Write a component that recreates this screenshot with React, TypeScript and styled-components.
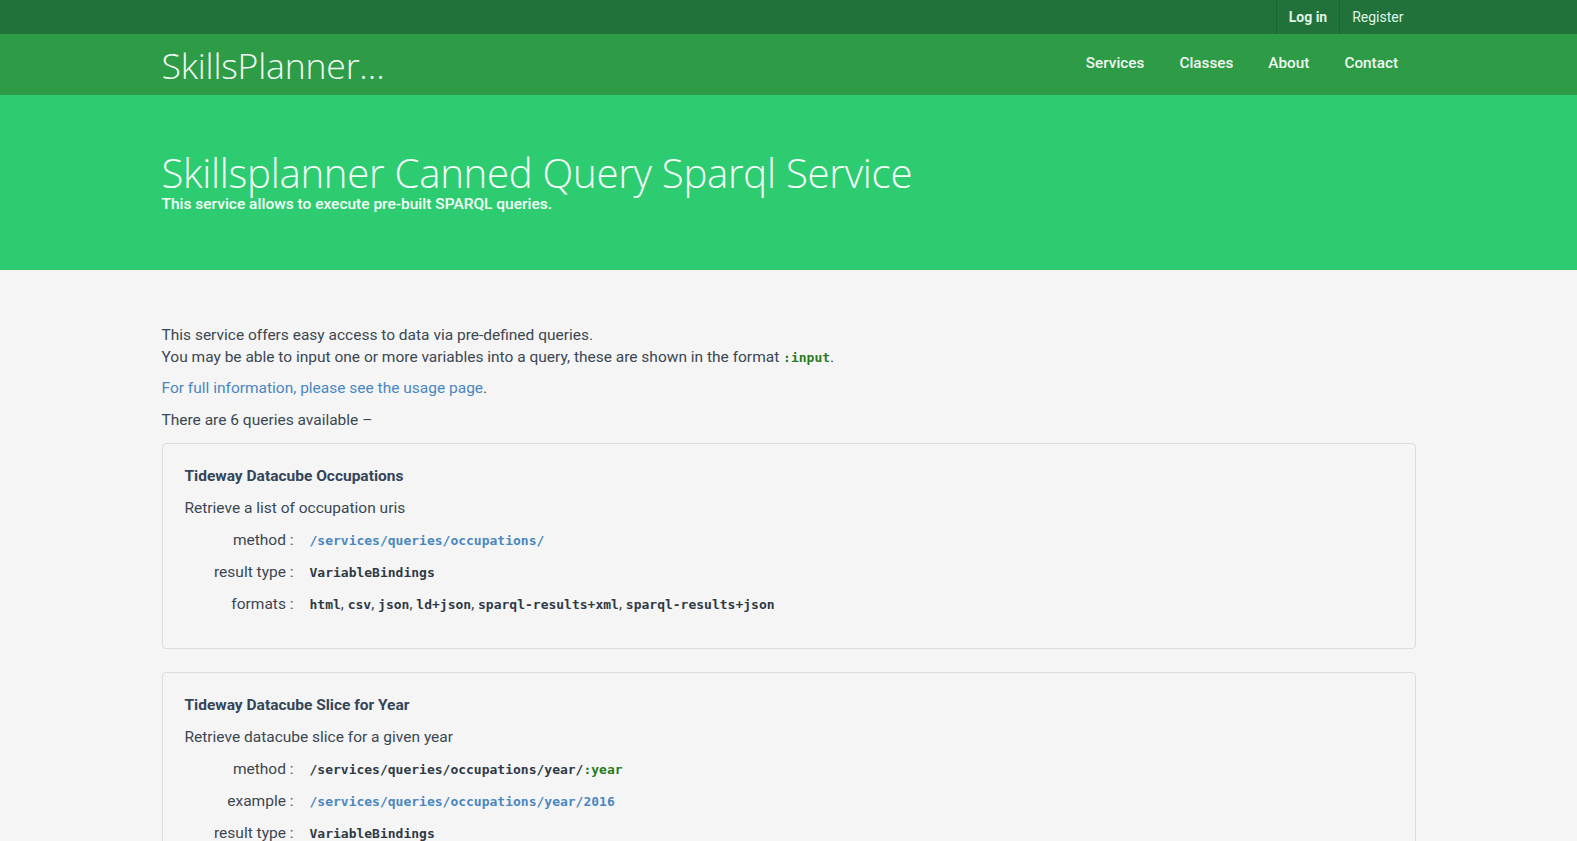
import React from "react";
import styled, { createGlobalStyle } from "styled-components";

const Global = createGlobalStyle`
  html, body { margin: 0; padding: 0; }
  body {
    background: #f5f5f5;
    font-family: Roboto, "Liberation Sans", Arial, sans-serif;
    font-size: 15.5px;
    line-height: 21px;
    color: #34495e;
  }
  * { box-sizing: border-box; }
`;

const Container = styled.div`
  width: 1254px;
  margin: 0 auto;
`;

const TopBar = styled.div`
  background: #21723a;
  height: 34px;
`;

const TopInner = styled(Container)`
  display: flex;
  justify-content: flex-end;
  height: 100%;
`;

const TopLink = styled.a<{ $bold?: boolean; $divider?: boolean }>`
  display: flex;
  align-items: center;
  padding: 0 12px;
  height: 100%;
  color: #dff3e4;
  font-size: 14px;
  font-weight: ${(p) => (p.$bold ? 700 : 400)};
  text-decoration: none;
  border-left: ${(p) => (p.$divider ? "1px solid #1b6331" : "none")};
  border-right: ${(p) => (p.$divider ? "1px solid #1b6331" : "none")};
`;

const NavBar = styled.div`
  background: #2e9b47;
  height: 61px;
`;

const NavInner = styled(Container)`
  display: flex;
  align-items: center;
  justify-content: space-between;
  height: 100%;
`;

const Brand = styled.a`
  font-family: "Open Sans", sans-serif;
  font-weight: 300;
  font-size: 35.6px;
  color: #f2fbf4;
  text-decoration: none;
  margin-top: 2px;
  letter-spacing: -0.2px;
`;

const NavLinks = styled.nav`
  display: flex;
  align-items: center;
`;

const NavLink = styled.a`
  padding: 0 17.5px;
  color: #eef8f0;
  font-size: 15.3px;
  font-weight: 500;
  text-decoration: none;
  margin-top: -2px;
`;

const Hero = styled.header`
  background: #2ecc71;
  height: 175px;
  padding-top: 54px;
`;

const HeroTitle = styled.h1`
  font-family: "Open Sans", sans-serif;
  font-weight: 300;
  font-size: 40.2px;
  line-height: 48px;
  color: #f4fff8;
  margin: 0;
  letter-spacing: -0.3px;
`;

const HeroSub = styled.p`
  margin: -3px 0 0;
  color: #f4fff8;
  font-size: 15.5px;
  font-weight: 500;
`;

const Main = styled(Container)`
  padding-top: 55px;
`;

const Para = styled.p<{ $mb?: number }>`
  margin: 0 0 ${(p) => (p.$mb ?? 10)}px;
  color: #3b4752;
  line-height: 21.5px;
`;

const Link = styled.a`
  color: #4a87bf;
  text-decoration: none;
`;

const InlineCode = styled.code`
  font-family: "DejaVu Sans Mono", monospace;
  font-size: 13px;
  font-weight: 700;
  color: #2a7a1e;
`;

const Card = styled.section`
  border: 1px solid #dcdcdc;
  border-radius: 4px;
  padding: 22px 22px 33px;
  margin-bottom: 23px;
`;

const CardTitle = styled.h4`
  margin: 0 0 11px;
  font-size: 15.5px;
  line-height: 21px;
  font-weight: 700;
  color: #34455a;
`;

const CardDesc = styled.p`
  margin: 0 0 11px;
  color: #3b4752;
`;

const Dl = styled.dl`
  display: grid;
  grid-template-columns: 109px 1fr;
  column-gap: 16px;
  row-gap: 11px;
  margin: 0;
`;

const Dt = styled.dt`
  text-align: right;
  color: #3b4752;
`;

const Dd = styled.dd`
  margin: 0;
  font-family: "DejaVu Sans Mono", monospace;
  font-size: 13px;
  font-weight: 700;
  color: #2f3a46;
`;

const Mono = styled.span<{ $tone?: "link" | "var" | "plain" }>`
  font-family: "DejaVu Sans Mono", monospace;
  font-size: 13px;
  font-weight: 700;
  color: ${(p) =>
    p.$tone === "link" ? "#4a87bf" : p.$tone === "var" ? "#2a7a1e" : "#2f3a46"};
`;

const Sep = styled.span`
  font-family: Roboto, sans-serif;
  font-size: 15.5px;
  font-weight: 400;
  color: #3b4752;
`;

type Row = { label: string; value: React.ReactNode };

const formats = ["html", "csv", "json", "ld+json", "sparql-results+xml", "sparql-results+json"];

const FormatList = () => (
  <>
    {formats.map((f, i) => (
      <React.Fragment key={f}>
        <Mono>{f}</Mono>
        {i < formats.length - 1 && <Sep>, </Sep>}
      </React.Fragment>
    ))}
  </>
);

const queries: { title: string; desc: string; rows: Row[] }[] = [
  {
    title: "Tideway Datacube Occupations",
    desc: "Retrieve a list of occupation uris",
    rows: [
      { label: "method :", value: <Mono $tone="link">/services/queries/occupations/</Mono> },
      { label: "result type :", value: <Mono>VariableBindings</Mono> },
      { label: "formats :", value: <FormatList /> },
    ],
  },
  {
    title: "Tideway Datacube Slice for Year",
    desc: "Retrieve datacube slice for a given year",
    rows: [
      {
        label: "method :",
        value: (
          <>
            <Mono>/services/queries/occupations/year/</Mono>
            <Mono $tone="var">:year</Mono>
          </>
        ),
      },
      { label: "example :", value: <Mono $tone="link">/services/queries/occupations/year/2016</Mono> },
      { label: "result type :", value: <Mono>VariableBindings</Mono> },
      { label: "formats :", value: <FormatList /> },
    ],
  },
];

export default function App() {
  return (
    <>
      <Global />
      <TopBar>
        <TopInner>
          <TopLink href="#" $bold $divider>Log in</TopLink>
          <TopLink href="#">Register</TopLink>
        </TopInner>
      </TopBar>
      <NavBar>
        <NavInner>
          <Brand href="#">SkillsPlanner…</Brand>
          <NavLinks>
            <NavLink href="#">Services</NavLink>
            <NavLink href="#">Classes</NavLink>
            <NavLink href="#">About</NavLink>
            <NavLink href="#">Contact</NavLink>
          </NavLinks>
        </NavInner>
      </NavBar>
      <Hero>
        <Container>
          <HeroTitle>Skillsplanner Canned Query Sparql Service</HeroTitle>
          <HeroSub>This service allows to execute pre-built SPARQL queries.</HeroSub>
        </Container>
      </Hero>
      <Main>
        <Para $mb={0}>This service offers easy access to data via pre-defined queries.</Para>
        <Para>
          You may be able to input one or more variables into a query, these are shown in the format{" "}
          <InlineCode>:input</InlineCode>.
        </Para>
        <Para>
          <Link href="#">For full information, please see the usage page</Link>.
        </Para>
        <Para $mb={12}>There are 6 queries available –</Para>
        {queries.map((q) => (
          <Card key={q.title}>
            <CardTitle>{q.title}</CardTitle>
            <CardDesc>{q.desc}</CardDesc>
            <Dl>
              {q.rows.map((r) => (
                <React.Fragment key={r.label}>
                  <Dt>{r.label}</Dt>
                  <Dd>{r.value}</Dd>
                </React.Fragment>
              ))}
            </Dl>
          </Card>
        ))}
      </Main>
    </>
  );
}
